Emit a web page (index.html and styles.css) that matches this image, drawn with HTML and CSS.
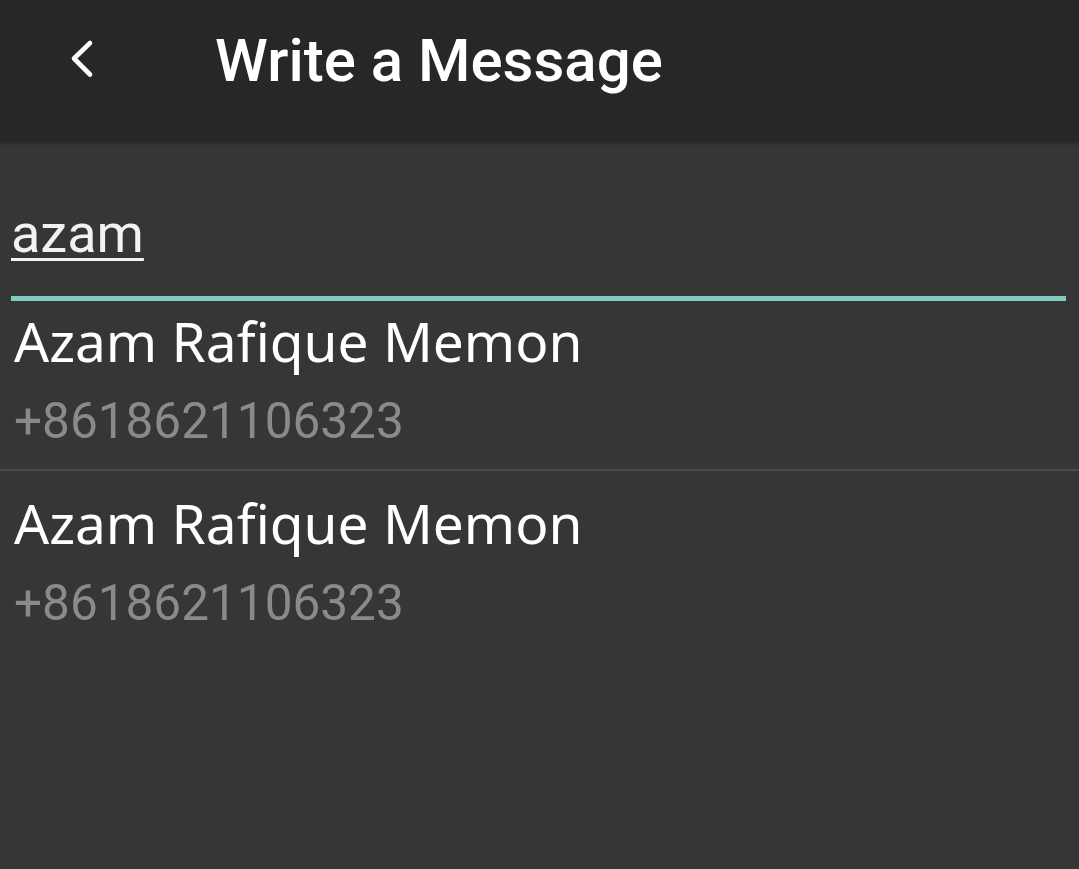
FILE: index.html
```html
<!DOCTYPE html>
<html lang="en">
<head>
<meta charset="utf-8">
<title>Write a Message</title>
<link rel="stylesheet" href="styles.css">
</head>
<body>
<div class="app">
  <header class="topbar">
    <svg class="back" width="40" height="72" viewBox="0 0 40 72" aria-hidden="true">
      <polyline points="30,18 14,33.5 30,49.5" fill="none" stroke="#ffffff" stroke-width="4.6" stroke-linecap="round" stroke-linejoin="round"/>
    </svg>
    <h1 class="title">Write a Message</h1>
  </header>
  <main class="content">
    <div class="field"><span class="query">azam</span></div>
    <ul class="results">
      <li class="item">
        <div class="name">Azam Rafique Memon</div>
        <div class="phone">+8618621106323</div>
      </li>
      <li class="item">
        <div class="name">Azam Rafique Memon</div>
        <div class="phone">+8618621106323</div>
      </li>
    </ul>
  </main>
</div>
</body>
</html>
```
FILE: styles.css
```css
html, body {
  margin: 0;
  padding: 0;
  height: 100%;
}
body {
  background: #363636;
  font-family: Roboto, "Noto Sans", "Liberation Sans", sans-serif;
  color: #ffffff;
}
.app {
  display: flex;
  flex-direction: column;
  min-height: 100%;
}
.topbar {
  height: 141px;
  box-sizing: border-box;
  background: #272727;
  display: flex;
  align-items: flex-start;
  padding: 25px 0 0 60px;
  box-shadow: 0 2px 4px rgba(0, 0, 0, 0.35);
  position: relative;
  z-index: 1;
}
.back {
  display: block;
  flex: none;
}
.title {
  margin: 0 0 0 115px;
  font-size: 60px;
  line-height: 72px;
  font-weight: 500;
  color: #ffffff;
}
.content {
  flex: 1;
}
.field {
  margin: 0 13px 0 11px;
  padding: 61px 0 30px 0;
  border-bottom: 5px solid #80cbc4;
}
.query {
  font-size: 54px;
  line-height: 64px;
  display: inline-block;
  text-decoration: underline;
  text-decoration-thickness: 3px;
  text-underline-offset: 6px;
  color: #f2f2f2;
}
.results {
  list-style: none;
  margin: 0;
  padding: 0;
}
.item {
  padding: 3px 14px 11px;
}
.item + .item {
  border-top: 2px solid #4b4b4b;
  padding-top: 15px;
}
.name {
  font-family: "Noto Sans", "Open Sans", sans-serif;
  font-size: 55px;
  line-height: 74px;
  color: #ffffff;
}
.phone {
  margin-top: 6px;
  font-size: 49.5px;
  line-height: 74px;
  color: #8a8a8a;
}
```
